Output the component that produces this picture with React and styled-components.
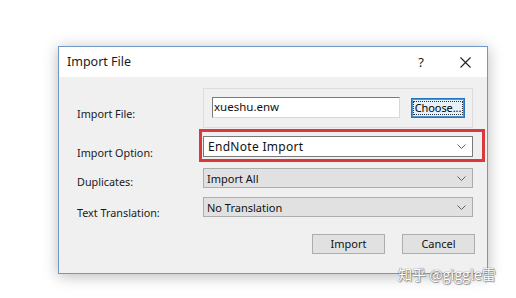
import React from "react";
import styled, { createGlobalStyle } from "styled-components";

const Global = createGlobalStyle`
  html, body { margin: 0; padding: 0; background: #ffffff; }
  body { font-family: "Noto Sans", "Open Sans", sans-serif; }
`;

const Page = styled.div`
  position: relative;
  width: 516px;
  height: 298px;
  overflow: hidden;
  padding: 46px 0 0 58px;
  box-sizing: border-box;
`;

const Dialog = styled.div`
  width: 430px;
  height: 228px;
  box-sizing: border-box;
  border: 1px solid #6f98c4;
  background: #f0f0f0;
  box-shadow: 0 2px 14px rgba(0, 0, 0, 0.28);
  display: flex;
  flex-direction: column;
`;

const TitleBar = styled.div`
  height: 30px;
  flex: none;
  background: #ffffff;
  display: flex;
  align-items: center;
  padding-left: 8px;
  font-size: 12.5px;
  color: #1a1a1a;
`;

const Title = styled.span`
  flex: 1;
  padding-bottom: 1px;
`;

const TitleBtn = styled.div`
  width: ${(p) => p.$w}px;
  height: 30px;
  display: flex;
  align-items: center;
  justify-content: center;
  font-size: 13px;
  color: #222;
`;

const Body = styled.div`
  flex: 1;
  display: flex;
  flex-direction: column;
  padding: 11px 0 0 18px;
`;

const Row = styled.div`
  display: flex;
  align-items: center;
  margin-top: ${(p) => p.$mt || 0}px;
`;

const Label = styled.div`
  width: 126px;
  flex: none;
  font-size: 10.8px;
  line-height: 16px;
  color: #1a1a1a;
  padding-top: ${(p) => p.$dy * 2}px;
  margin-bottom: -${(p) => p.$dy * 2}px;
  white-space: nowrap;
`;

const Control = styled.div`
  position: relative;
  width: 270px;
`;

const Group = styled.div`
  height: 40px;
  box-sizing: border-box;
  border: 1px solid #dcdcdc;
  display: flex;
  align-items: flex-start;
  padding: 8px 0 0 8px;
`;

const TextInput = styled.div`
  width: 188px;
  height: 21px;
  box-sizing: border-box;
  background: #fff;
  border-top: 1px solid #7a7a7a;
  border-left: 1px solid #7a7a7a;
  border-right: 1px solid #d8d8d8;
  border-bottom: 1px solid #d8d8d8;
  font-size: 11.5px;
  line-height: 18px;
  padding-left: 1px;
  color: #111;
`;

const ChooseBtn = styled.div`
  margin-left: 11px;
  margin-top: 1px;
  width: 54px;
  height: 20px;
  box-sizing: border-box;
  border: 1px solid #1f74c4;
  box-shadow: inset 0 0 0 1px #4b94d6;
  background: #e5f1fb;
  padding: 2px 1px;
`;

const FocusRect = styled.div`
  height: 100%;
  box-sizing: border-box;
  border: 1px dotted #333;
  font-size: 11px;
  line-height: 12px;
  text-align: center;
  letter-spacing: -0.1px;
  color: #000;
  white-space: nowrap;
`;

const Select = styled.div`
  height: ${(p) => p.$h}px;
  box-sizing: border-box;
  background: ${(p) => (p.$white ? "#ffffff" : "#e1e1e1")};
  border: 1px solid ${(p) => (p.$white ? "#7a7a7a" : "#adadad")};
  display: flex;
  align-items: center;
  padding: 0 6px 0 ${(p) => (p.$white ? 4 : 3)}px;
  font-size: ${(p) => (p.$white ? 12 : 11)}px;
  letter-spacing: ${(p) => (p.$white ? 0.3 : 0)}px;
  color: #111;
`;

const SelectText = styled.span`
  flex: 1;
`;

const Highlight = styled.div`
  position: absolute;
  left: -4px;
  top: -7px;
  right: -12px;
  bottom: -5px;
  border: 3px solid #d9393b;
  pointer-events: none;
`;

const ButtonRow = styled.div`
  display: flex;
  justify-content: flex-end;
  gap: 17px;
  margin-top: 17px;
  padding-right: 12px;
`;

const Button = styled.div`
  width: 73px;
  height: 20px;
  box-sizing: border-box;
  background: #e1e1e1;
  border: 1px solid #adadad;
  font-size: 11px;
  line-height: 18px;
  text-align: center;
  color: #111;
`;

const Watermark = styled.div`
  position: absolute;
  left: 398px;
  top: 264px;
  font-size: 14px;
  color: #ffffff;
  font-family: "Noto Sans CJK SC", "Noto Sans", sans-serif;
  text-shadow: 0 0 1px #777, 0 0 1px #777, 1px 1px 1px #999;
  white-space: nowrap;
`;

const Chevron = () => (
  <svg width="9" height="5" viewBox="0 0 9 5">
    <path d="M0.5 0.5 L4.5 4.5 L8.5 0.5" fill="none" stroke="#606060" strokeWidth="1" />
  </svg>
);

const CloseX = () => (
  <svg width="11" height="11" viewBox="0 0 11 11">
    <path d="M0.5 0.5 L10.5 10.5 M10.5 0.5 L0.5 10.5" stroke="#222" strokeWidth="1.1" />
  </svg>
);

export default function App() {
  return (
    <>
      <Global />
      <Page>
        <Dialog>
          <TitleBar>
            <Title>Import File</Title>
            <TitleBtn $w={36}>?</TitleBtn>
            <TitleBtn $w={8} />
            <TitleBtn $w={36}>
              <CloseX />
            </TitleBtn>
            <TitleBtn $w={4} />
          </TitleBar>
          <Body>
            <Row>
              <Label $dy={3}>Import File:</Label>
              <Control>
                <Group>
                  <TextInput>xueshu.enw</TextInput>
                  <ChooseBtn>
                    <FocusRect>Choose...</FocusRect>
                  </ChooseBtn>
                </Group>
              </Control>
            </Row>

            <Row $mt={8}>
              <Label $dy={3}>Import Option:</Label>
              <Control>
                <Select $h={21} $white>
                  <SelectText>EndNote Import</SelectText>
                  <Chevron />
                </Select>
                <Highlight />
              </Control>
            </Row>

            <Row $mt={11}>
              <Label $dy={2}>Duplicates:</Label>
              <Control>
                <Select $h={20}>
                  <SelectText>Import All</SelectText>
                  <Chevron />
                </Select>
              </Control>
            </Row>

            <Row $mt={9}>
              <Label $dy={3}>Text Translation:</Label>
              <Control>
                <Select $h={20}>
                  <SelectText>No Translation</SelectText>
                  <Chevron />
                </Select>
              </Control>
            </Row>

            <ButtonRow>
              <Button>Import</Button>
              <Button>Cancel</Button>
            </ButtonRow>
          </Body>
        </Dialog>
        <Watermark>知乎 @giggle雷</Watermark>
      </Page>
    </>
  );
}
